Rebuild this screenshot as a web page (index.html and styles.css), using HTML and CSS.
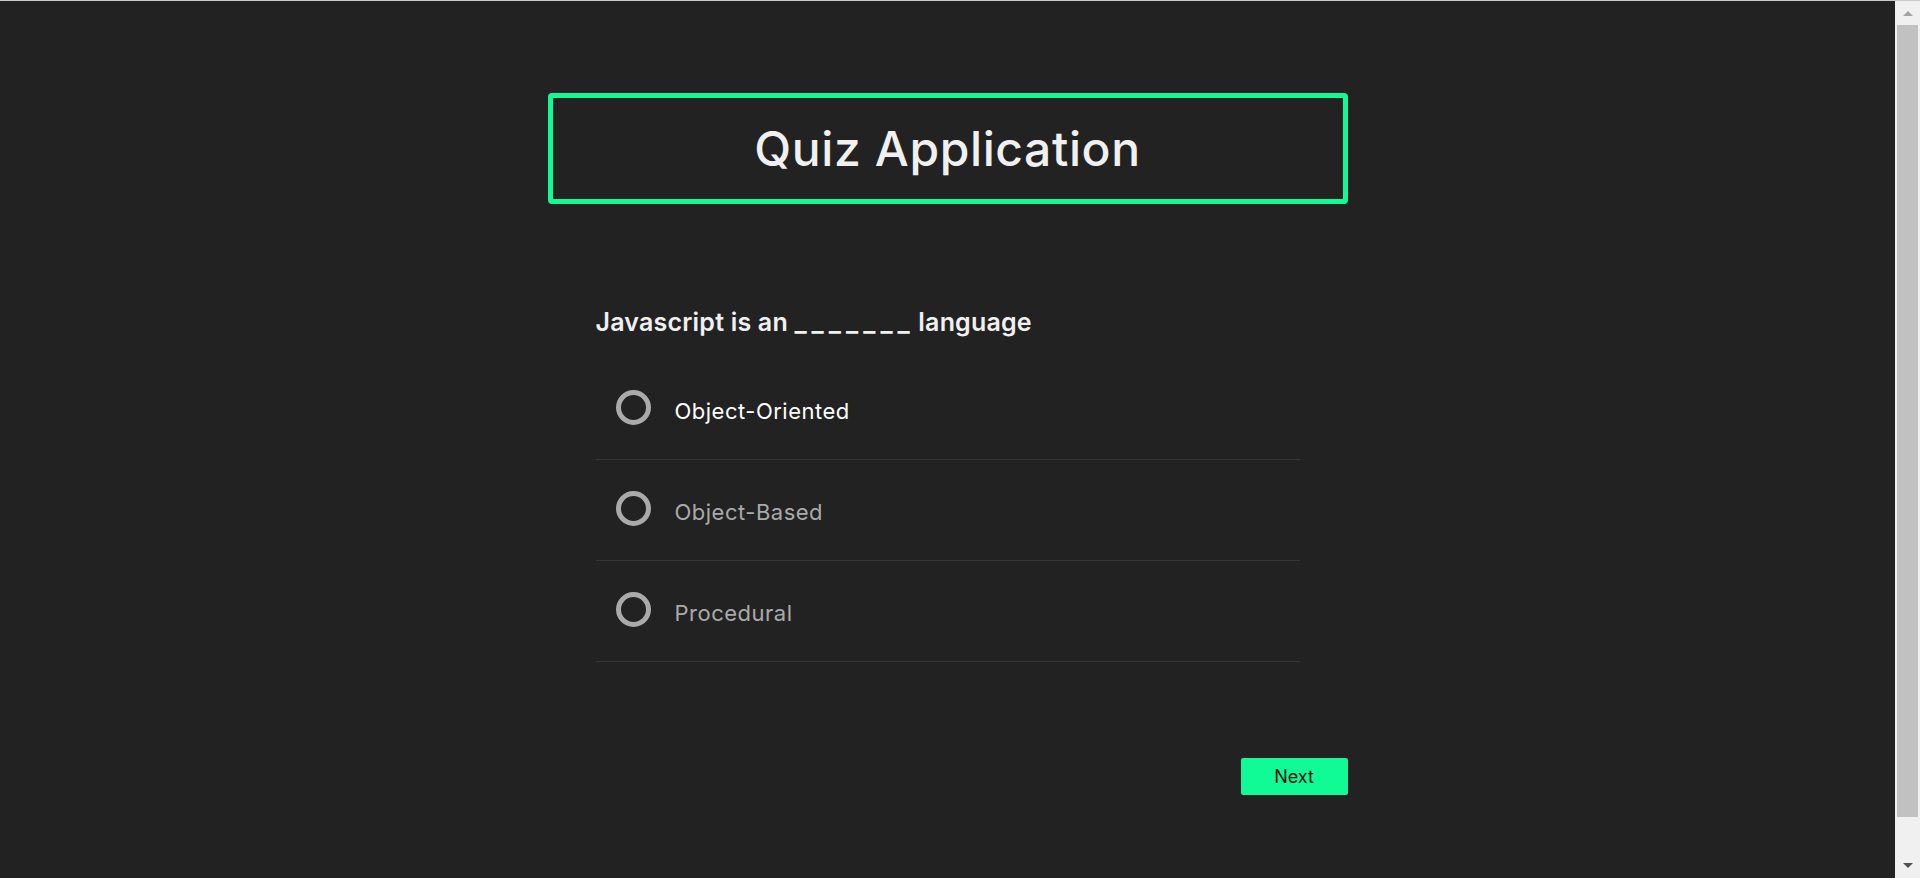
FILE: index.html
```html
<!DOCTYPE html>
<html lang="en">
<head>
<meta charset="utf-8">
<title>Quiz Application</title>
<link rel="stylesheet" href="styles.css">
</head>
<body>
  <div class="viewport">
    <main class="app">
      <header class="title-box">
        <h1 class="title">Quiz Application</h1>
      </header>
      <section class="quiz">
        <h2 class="question">Javascript is an <span class="blank">_______</span> language</h2>
        <ul class="options">
          <li class="option option--hover">
            <span class="radio"></span>
            <span class="option-label">Object-Oriented</span>
          </li>
          <li class="option">
            <span class="radio"></span>
            <span class="option-label">Object-Based</span>
          </li>
          <li class="option">
            <span class="radio"></span>
            <span class="option-label">Procedural</span>
          </li>
        </ul>
      </section>
      <div class="actions">
        <button class="next-btn" type="button">Next</button>
      </div>
    </main>
  </div>
  <aside class="scrollbar" aria-hidden="true">
    <div class="sb-btn sb-btn--up"><span class="sb-arrow sb-arrow--up"></span></div>
    <div class="sb-track"><div class="sb-thumb"></div></div>
    <div class="sb-btn sb-btn--down"><span class="sb-arrow sb-arrow--down"></span></div>
  </aside>
</body>
</html>
```
FILE: styles.css
```css
* {
  box-sizing: border-box;
}

html {
  background: #222222;
}

body {
  margin: 0;
  height: 100vh;
  overflow: hidden;
  display: flex;
  border-top: 1px solid #c9c9c9;
  background: #222222;
  font-family: "Inter", "Noto Sans", sans-serif;
  color: #f0f0f0;
}

.viewport {
  flex: 1;
  min-width: 0;
}

/* Browser scrollbar as it appears in the screenshot */
.scrollbar {
  flex: none;
  width: 25px;
  display: flex;
  flex-direction: column;
  background: #f0f0f0;
}

.sb-btn {
  flex: none;
  display: flex;
  align-items: center;
  justify-content: center;
}

.sb-btn--up {
  height: 24px;
}

.sb-btn--down {
  height: 25px;
}

.sb-track {
  flex: 1;
  padding: 0 2px;
}

.sb-thumb {
  height: 792px;
  background: #c1c1c1;
}

.sb-arrow {
  width: 0;
  height: 0;
  border-left: 5px solid transparent;
  border-right: 5px solid transparent;
}

.sb-arrow--up {
  border-bottom: 5px solid #a3a3a3;
}

.sb-arrow--down {
  border-top: 5px solid #505050;
}

.app {
  width: 800px;
  margin: 92px auto 0;
}

.title-box {
  height: 111px;
  border: 5px solid #10fa95;
  border-radius: 4px;
  display: flex;
  align-items: center;
  justify-content: center;
}

.title {
  margin: 0;
  font-size: 48px;
  font-weight: 500;
  line-height: 1;
  color: #f0f0f0;
  letter-spacing: 0.6px;
}

.quiz {
  margin-top: 100px;
  padding: 0 48px;
}

.question {
  margin: 0 0 19px;
  font-size: 25px;
  line-height: 36px;
  font-weight: 600;
  color: #f0f0f0;
  letter-spacing: 0.2px;
}

.blank {
  font-size: 26px;
  letter-spacing: 5px;
  margin-right: -3px;
}

.options {
  list-style: none;
  margin: 0;
  padding: 0;
}

.option {
  display: flex;
  align-items: center;
  gap: 24px;
  height: 101px;
  padding-left: 20px;
  border-bottom: 1px solid #363636;
  color: #aaaaaa;
  cursor: pointer;
}

.option--hover {
  color: #ffffff;
}

.radio {
  flex: none;
  width: 35px;
  height: 35px;
  border: 5px solid #aaaaaa;
  border-radius: 50%;
  margin-top: -4px;
}

.option-label {
  margin-top: 4px;
  font-size: 22px;
  line-height: 28px;
  font-weight: 400;
  letter-spacing: 0.5px;
}

.actions {
  margin-top: 96px;
  display: flex;
  justify-content: flex-end;
}

.next-btn {
  width: 107px;
  height: 37px;
  border: none;
  border-radius: 2px;
  background: #10fa95;
  color: #111111;
  font-family: "Inter", "Noto Sans", sans-serif;
  font-size: 18px;
  font-weight: 400;
  cursor: pointer;
}
```
